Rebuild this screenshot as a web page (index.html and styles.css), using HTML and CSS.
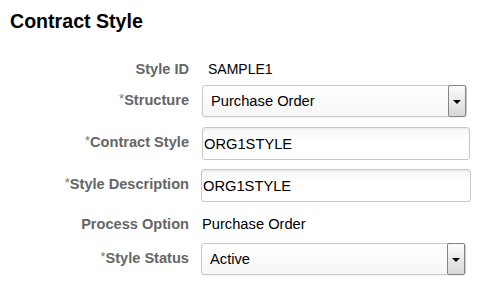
FILE: index.html
```html
<!DOCTYPE html>
<html lang="en">
<head>
    <meta charset="UTF-8">
    <title>Contract Style</title>
    <link rel="stylesheet" href="styles.css">
</head>
<body>
    <div class="page">
        <h1>Contract Style</h1>

        <div class="form">
            <div class="row row-id">
                <label class="lbl">Style ID</label>
                <span class="value value-id">SAMPLE1</span>
            </div>
            <div class="row row-gap">
                <label class="lbl"><span class="req">*</span>Structure</label>
                <div class="select">
                    <span class="select-text">Purchase Order</span>
                    <span class="select-btn"><i class="arrow"></i></span>
                </div>
            </div>
            <div class="row">
                <label class="lbl"><span class="req">*</span>Contract Style</label>
                <input class="field" type="text" value="ORG1STYLE">
            </div>
            <div class="row">
                <label class="lbl"><span class="req">*</span>Style Description</label>
                <input class="field field-wide" type="text" value="ORG1STYLE">
            </div>
            <div class="row row-text">
                <label class="lbl">Process Option</label>
                <span class="value">Purchase Order</span>
            </div>
            <div class="row">
                <label class="lbl"><span class="req">*</span>Style Status</label>
                <div class="select select-status">
                    <span class="select-text">Active</span>
                    <span class="select-btn"><i class="arrow"></i></span>
                </div>
            </div>
        </div>
    </div>
</body>
</html>
```

FILE: styles.css
```css
*{
    margin: 0;
    padding: 0;
    box-sizing: border-box;
}
body{
    background-color: #fff;
    font-family: "Liberation Sans", Arial, sans-serif;
    color: #000;
}
.page{
    padding: 10px 0 0 10px;
}
h1{
    font-size: 19.6px;
    font-weight: bold;
    line-height: 22px;
    color: #000;
}
.form{
    margin-top: 26px;
}
.row{
    display: flex;
    align-items: center;
    margin-bottom: 9px;
}
.row-id{
    height: 22px;
    margin-bottom: 5px;
    align-items: baseline;
    padding-top: 3px;
}
.row-gap{
    margin-bottom: 10px;
}
.row-text{
    height: 28px;
    margin-bottom: 4px;
    align-items: baseline;
    padding-top: 5px;
}
.lbl{
    width: 179px;
    text-align: right;
    font-size: 14.6px;
    font-weight: bold;
    color: #666;
    margin-right: 12px;
    padding-bottom: 4px;
    white-space: nowrap;
}
.req{
    font-weight: normal;
    font-size: 13px;
    color: #777;
    vertical-align: 2px;
}
.value{
    font-size: 14.7px;
    color: #000;
    padding-left: 1px;
}
.value-id{
    font-size: 14px;
    padding-left: 7px;
}
.select{
    display: flex;
    align-items: center;
    width: 265px;
    height: 32px;
    border: 1px solid #c8c8c8;
    border-radius: 3px;
    background: linear-gradient(#fff, #f6f6f6);
    box-shadow: 0 1px 1px rgba(0,0,0,.06);
    padding: 1px;
    margin-left: 1px;
}
.select-status{
    margin-left: 0;
}
.select-text{
    flex: 1;
    font-size: 14.7px;
    padding-left: 7px;
}
.select-btn{
    width: 18px;
    height: 32px;
    margin: -2px -1px -2px 0;
    border: 1px solid #858585;
    border-radius: 2px;
    background: linear-gradient(#fbfbfb, #d8d8d8);
    display: flex;
    align-items: center;
    justify-content: center;
}
.arrow{
    display: block;
    width: 0;
    height: 0;
    border-left: 4px solid transparent;
    border-right: 4px solid transparent;
    border-top: 4px solid #000;
    margin-top: 2px;
}
.field{
    width: 268px;
    height: 33px;
    border: 1px solid #c8c8c8;
    border-radius: 3px;
    background: linear-gradient(#f6f6f6, #fff 40%);
    box-shadow: inset 0 1px 2px rgba(0,0,0,.06);
    font-family: "Liberation Sans", Arial, sans-serif;
    font-size: 14.7px;
    color: #000;
    padding: 0 1px;
    outline: none;
    margin-left: 1px;
}
.field-wide{
    width: 270px;
    margin-left: 0;
}
```
